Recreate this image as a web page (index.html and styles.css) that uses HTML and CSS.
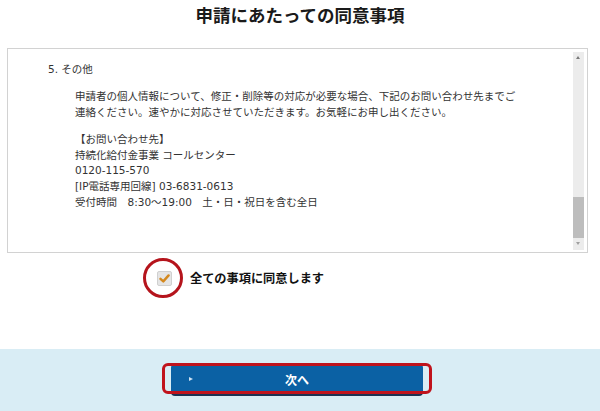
FILE: index.html
```html
<!DOCTYPE html>
<html lang="ja">
<head>
    <meta charset="UTF-8">
    <meta name="viewport" content="width=device-width, initial-scale=1.0">
    <title>申請にあたっての同意事項</title>
    <link rel="stylesheet" href="styles.css">
</head>
<body>
    <h1 class="page-title">申請にあたっての同意事項</h1>

    <div class="terms">
        <div class="terms-body">
            <h2 class="terms-title">5. その他</h2>
            <p class="terms-text">
                申請者の個人情報について、修正・削除等の対応が必要な場合、下記のお問い合わせ先までご<br>
                連絡ください。速やかに対応させていただきます。お気軽にお申し出ください。
            </p>
            <p class="terms-text">
                【お問い合わせ先】<br>
                持続化給付金事業 コールセンター<br>
                0120-115-570<br>
                [IP電話専用回線] 03-6831-0613<br>
                受付時間&emsp;8:30～19:00&emsp;土・日・祝日を含む全日
            </p>
        </div>
        <div class="scrollbar">
            <span class="scroll-arrow up"></span>
            <span class="scroll-space"></span>
            <span class="scroll-thumb"></span>
            <span class="scroll-arrow down"></span>
        </div>
    </div>

    <label class="agree">
        <span class="checkbox">
            <svg width="11" height="11" viewBox="0 0 11 11">
                <path d="M1.5 5.8 L4.3 8.4 L9.6 2.4" fill="none" stroke="#d4891f" stroke-width="2.4" stroke-linecap="round" stroke-linejoin="round"/>
            </svg>
            <span class="mark-circle"></span>
        </span>
        <span class="agree-text">全ての事項に同意します</span>
    </label>

    <div class="footer">
        <div class="btn-wrap">
            <button class="btn-next">
                <span class="btn-arrow"></span>
                次へ
            </button>
            <span class="mark-box"></span>
        </div>
    </div>
</body>
</html>
```

FILE: styles.css
```css
body {
    margin: 0;
    font-family: "Noto Sans CJK JP", "Noto Sans", sans-serif;
    color: #333;
    background: #fff;
}

.page-title {
    margin: 0;
    padding-top: 4px;
    font-size: 17.5px;
    line-height: 21px;
    font-weight: bold;
    color: #1a1a1a;
    text-align: center;
}

.terms {
    display: flex;
    box-sizing: border-box;
    height: 205px;
    margin: 23px 12px 0 7px;
    border: 1px solid #d2d2d2;
}

.terms-body {
    flex: 1;
    padding: 13px 0 0 40px;
    overflow: hidden;
    font-family: "DejaVu Sans", "Noto Sans CJK JP", sans-serif;
    font-size: 10.5px;
    line-height: 15.7px;
}

.terms-title {
    margin: 0;
    font-size: 10.5px;
    font-weight: normal;
}

.terms-text {
    margin: 11.4px 0 0 27px;
}

.scrollbar {
    display: flex;
    flex-direction: column;
    width: 11px;
    margin: 3px 3px 2px 0;
    background: #ececec;
}

.scroll-arrow {
    height: 12px;
    position: relative;
}

.scroll-arrow::after {
    content: "";
    position: absolute;
    left: 3px;
    border-left: 2.5px solid transparent;
    border-right: 2.5px solid transparent;
}

.scroll-arrow.up::after {
    top: 4px;
    border-bottom: 3px solid #7a7a7a;
}

.scroll-arrow.down::after {
    top: 4px;
    border-top: 3px solid #a0a0a0;
}

.scroll-space {
    flex: 1;
}

.scroll-thumb {
    height: 41px;
    background: #bdbdbd;
}

.agree {
    display: flex;
    align-items: center;
    height: 20px;
    margin-top: 15px;
    padding-left: 157px;
}

.checkbox {
    position: relative;
    display: flex;
    align-items: center;
    justify-content: center;
    box-sizing: border-box;
    width: 15px;
    height: 15px;
    background: #e5e5e5;
    border: 1px solid #d0d0d0;
    border-radius: 2px;
}

.mark-circle {
    position: absolute;
    left: -15px;
    top: -14px;
    width: 34px;
    height: 34px;
    border: 3px solid #b5141c;
    border-radius: 50%;
}

.agree-text {
    margin-left: 18px;
    font-size: 12.2px;
    font-weight: bold;
    color: #111;
}

.footer {
    height: 62px;
    margin-top: 61px;
    padding-top: 15px;
    box-sizing: border-box;
    background: #d9edf5;
}

.btn-wrap {
    position: relative;
    width: 252px;
    margin-left: 171px;
}

.btn-next {
    position: relative;
    display: block;
    width: 100%;
    height: 30px;
    padding: 0;
    border: none;
    border-radius: 4px;
    background: #0b61a4;
    box-shadow: 0 2px 0 #1d3252;
    color: #fff;
    font-family: inherit;
    font-size: 12px;
    font-weight: bold;
}

.btn-arrow {
    position: absolute;
    left: 18px;
    top: 13px;
    border-top: 2.5px solid transparent;
    border-bottom: 2.5px solid transparent;
    border-left: 4px solid #cfe2f2;
}

.mark-box {
    position: absolute;
    left: -9px;
    top: -1px;
    width: 264px;
    height: 25px;
    border: 3px solid #c0131c;
    border-radius: 6px;
}
```
